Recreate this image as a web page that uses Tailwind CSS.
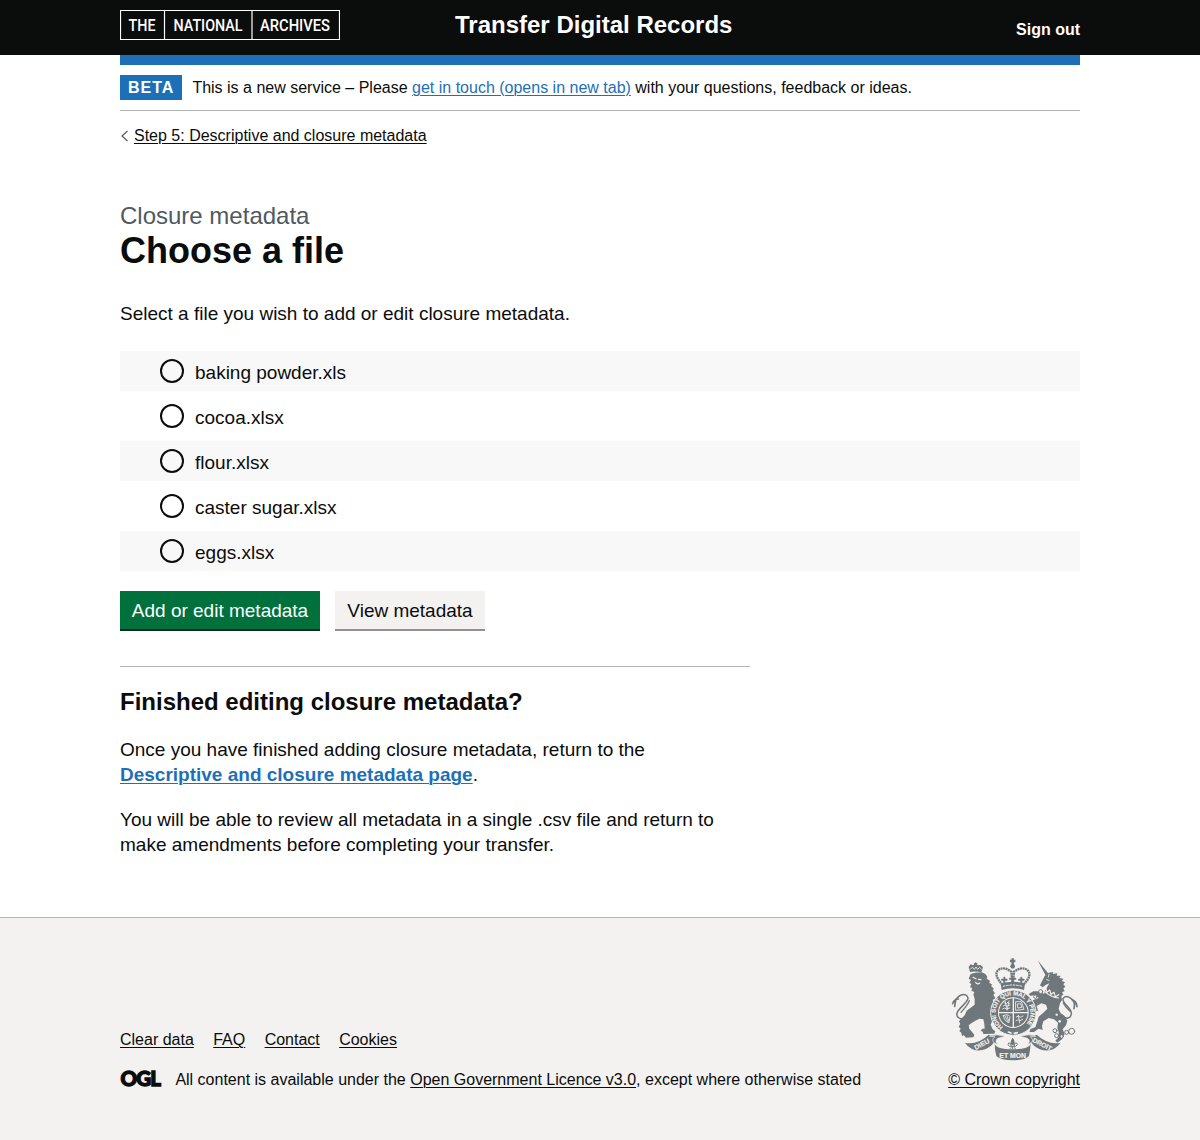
<!DOCTYPE html>
<html lang="en">
<head>
<meta charset="utf-8">
<title>Choose a file - Transfer Digital Records</title>
<script src="https://cdn.jsdelivr.net/npm/@tailwindcss/browser@4"></script>
</head>
<body class="min-h-[1140px] bg-white font-['Liberation_Sans',Arial,sans-serif] text-[#0b0c0c] text-[19px] leading-[25px]">
<header class="h-[55px] bg-[#0b0c0c] text-white">
  <div class="mx-auto flex w-[960px] items-start">
    <svg class="mt-[10px] h-[30px] w-[220px] shrink-0" viewBox="0 0 220 30" fill="#fff" font-family="Roboto, sans-serif" font-size="16.500" font-weight="500" role="img" aria-label="The National Archives">
      <path d="M.5 .5H219.500V29.500H.5ZM44.500 .5V29.500M132 .5V29.500" fill="none" stroke="#fff" stroke-width="1.200"/>
      <text x="8.500" y="21" textLength="27" lengthAdjust="spacingAndGlyphs">THE</text>
      <text x="53.500" y="21" textLength="69" lengthAdjust="spacingAndGlyphs">NATIONAL</text>
      <text x="140" y="21" textLength="70" lengthAdjust="spacingAndGlyphs">ARCHIVES</text>
    </svg>
    <a class="ml-[115px] mt-[10px] text-[24px] leading-[30px] font-bold" href="#">Transfer Digital Records</a>
    <a class="ml-auto mt-5 text-[16px] leading-5 font-bold" href="#">Sign out</a>
  </div>
</header>
<div class="mx-auto w-[960px]">
  <div class="h-[10px] bg-[#1d70b8]"></div>
  <div class="flex h-[46px] items-start border-b border-[#b1b4b6] pt-[10px] text-[16px] leading-[25px]">
    <strong class="h-[25px] w-[62px] bg-[#1d70b8] pl-2 tracking-[1px] text-white">BETA</strong>
    <span class="ml-[10.4px]">This is a new service – Please <a class="text-[#1d70b8] underline decoration-1 underline-offset-2" href="#">get in touch (opens in new tab)</a> with your questions, feedback or ideas.</span>
  </div>
  <a class="mt-[15px] flex h-5 items-center text-[16px] leading-5" href="#">
    <svg class="h-[12px] w-[14px]" viewBox="0 0 14 12" fill="none" stroke="#505a5f" stroke-width="1.200"><path d="M7.500 1L2 6l5.500 5"/></svg>
    <span class="underline decoration-1 underline-offset-2">Step 5: Descriptive and closure metadata</span>
  </a>
  <main class="pt-[55px]">
    <h1><span class="block text-[24px] leading-[30px] text-[#505a5f]">Closure metadata</span><span class="block text-[36px] leading-[40px] font-bold">Choose a file</span></h1>
    <p class="mt-[30px]">Select a file you wish to add or edit closure metadata.</p>
    <div class="mt-[25px] flex flex-col gap-[5px]">
      <label class="flex h-10 items-center gap-[11px] bg-[#f8f8f8] pl-10"><span class="size-6 rounded-full border-2 border-[#0b0c0c]"></span><span class="pt-[3px]">baking powder.xls</span></label>
      <label class="flex h-10 items-center gap-[11px] pl-10"><span class="size-6 rounded-full border-2 border-[#0b0c0c]"></span><span class="pt-[3px]">cocoa.xlsx</span></label>
      <label class="flex h-10 items-center gap-[11px] bg-[#f8f8f8] pl-10"><span class="size-6 rounded-full border-2 border-[#0b0c0c]"></span><span class="pt-[3px]">flour.xlsx</span></label>
      <label class="flex h-10 items-center gap-[11px] pl-10"><span class="size-6 rounded-full border-2 border-[#0b0c0c]"></span><span class="pt-[3px]">caster sugar.xlsx</span></label>
      <label class="flex h-10 items-center gap-[11px] bg-[#f8f8f8] pl-10"><span class="size-6 rounded-full border-2 border-[#0b0c0c]"></span><span class="pt-[3px]">eggs.xlsx</span></label>
    </div>
    <div class="mt-5 flex gap-[15px]">
      <button class="h-10 w-[200px] whitespace-nowrap border-b-2 border-[#002d18] bg-[#00703c] text-white">Add or edit metadata</button>
      <button class="h-10 w-[150px] whitespace-nowrap border-b-2 border-[#929191] bg-[#f3f2f1]">View metadata</button>
    </div>
    <section class="mt-[35px] w-[630px] border-t border-[#b1b4b6] pt-5">
      <h2 class="text-[24px] leading-[30px] font-bold">Finished editing closure metadata?</h2>
      <p class="mt-5">Once you have finished adding closure metadata, return to the<br><a class="font-bold text-[#1d70b8] underline decoration-1 underline-offset-2" href="#">Descriptive and closure metadata page</a>.</p>
      <p class="mt-5">You will be able to review all metadata in a single .csv file and return to<br>make amendments before completing your transfer.</p>
    </section>
  </main>
</div>
<footer class="mt-[60px] h-[223px] border-t border-[#b1b4b6] bg-[#f3f2f1] text-[16px] leading-5">
  <div class="mx-auto flex w-[960px] justify-between">
    <div class="pt-[112px]">
      <nav class="flex gap-[19.4px]">
        <a class="underline decoration-1 underline-offset-2" href="#">Clear data</a>
        <a class="underline decoration-1 underline-offset-2" href="#">FAQ</a>
        <a class="underline decoration-1 underline-offset-2" href="#">Contact</a>
        <a class="underline decoration-1 underline-offset-2" href="#">Cookies</a>
      </nav>
      <div class="mt-5 flex items-start">
        <svg class="mr-[13.4px] h-[18px] w-[42px] overflow-visible" viewBox="0 0 42 18" font-family="Lato, sans-serif" font-size="20.500" font-weight="900" fill="#0b0c0c" stroke="#0b0c0c" stroke-width="1.300" role="img" aria-label="Open Government Licence"><text x="0.400" y="15.900" textLength="40.500" lengthAdjust="spacing">OGL</text></svg>
        <span>All content is available under the <a class="underline decoration-1 underline-offset-2" href="#">Open Government Licence v3.0</a>, except where otherwise stated</span>
      </div>
    </div>
    <div class="flex flex-col items-end pt-[37px]">
      <svg class="h-[108px] w-[130px]" viewBox="30 15 390 324" fill="#6f777b" stroke-linecap="round" stroke-linejoin="round" role="img" aria-label="Royal coat of arms">
        <!-- lion -->
        <path d="M90 66l-4-15 6-8 8 3 4-6 6 1 3 5 9-1 7 7-5 15q-17-4-34-1z"/>
        <path d="M92 56l6-4 5 6 5-7 5 7 6-6 5 5" fill="none" stroke="#f3f2f1" stroke-width="2.500"/>
        <path d="M107 38v7M103 41h8" stroke="#6f777b" stroke-width="3"/>
        <path d="M92 72L105 68 126 67 136 72 142 80 140 86 150 92 148 98 157 104 153 108 162 116 158 120 165 130 160 134 166 145 158 150 162 160 156 166 154 185 160 200 156 214 152 224 158 238 166 244 163 251 130 252 128 245 122 242 127 236 134 236 133 222 130 208 118 206 106 212 94 220 86 226 88 236 98 248 103 255 100 262 78 263 72 256 66 258 64 248 58 244 62 236 56 230 61 222 57 214 64 206 74 196 80 182 94 172 104 164 104 146 100 134 103 126 94 122 97 114 90 112 94 102 88 98 93 90 86 86z"/>
        <path d="M99 82l9 4M115 88l8 1M107 97q6 8 12 2" stroke="#f3f2f1" stroke-width="3.500" fill="none"/>
        <g fill="none" stroke="#6f777b"><path d="M92 178C84 200 66 214 54 202C38 183 82 163 84 145C82 126 52 132 45 157" stroke-width="4.500"/><path d="M55 147Q41 148 38 161M47 148l-3 21" stroke-width="5"/><path d="M63 187Q82 166 88 152" stroke-width="4"/></g>
        <!-- unicorn -->
        <path d="M293 31L328 74 319 80Z"/>
        <path d="M314 78L326 68 340 66 338 72 352 70 350 77 362 77 358 84 370 86 366 93 375 97 370 103 376 110 370 115 374 124 366 126 370 134 364 138 366 150 360 160 356 176 362 190 374 198 382 212 378 226 368 238 374 252 366 268 352 278 346 272 356 262 356 246 352 234 354 218 342 208 326 204 310 214 306 228 308 240 296 236 282 246 268 246 272 236 286 232 292 214 296 200 310 188 322 176 318 164 304 160 290 168 294 182 284 186 278 168 272 160 280 150 296 144 288 134 272 138 266 132 280 124 300 124 312 132 316 122 322 110 328 100 318 104 308 112 300 106z"/>
        <path d="M311 122q22 21 45 22M317 114l4 13 8-7 4 13 9-6 4 13 10-6" fill="none" stroke="#f3f2f1" stroke-width="3.500"/>
        <path d="M320 89l7 2M327 73l-2 8" stroke="#f3f2f1" stroke-width="2.500"/>
        <g fill="none" stroke="#6f777b"><path d="M364 194C378 212 395 204 394 188C390 169 366 162 369 146C377 132 399 144 404 164" stroke-width="4.500"/><path d="M397 149Q410 154 411 170M404 160l-2 16" stroke-width="5"/><path d="M389 183Q375 170 370 159" stroke-width="4"/></g>
        <g fill="none" stroke="#6f777b" stroke-width="3"><circle cx="302" cy="125" r="6" fill="#f3f2f1"/><circle cx="286" cy="140" r="5" fill="#f3f2f1"/><circle cx="345" cy="242" r="6"/><circle cx="350" cy="257" r="6"/><circle cx="365" cy="259" r="5" fill="#f3f2f1"/><circle cx="380" cy="247" r="6"/><circle cx="395" cy="244" r="9"/></g>
        <g fill="#f3f2f1"><circle cx="350" cy="194" r="3.500"/><circle cx="362" cy="178" r="4"/><circle cx="359" cy="214" r="4"/></g>
        <!-- crown -->
        <path d="M218 25v20M210 33h16" stroke="#6f777b" stroke-width="7" stroke-linecap="butt"/><circle cx="218" cy="49" r="7"/>
        <path d="M188 105Q158 72 176 59Q192 49 214 65L218 105L222 65Q244 49 261 59Q280 75 249 105" fill="none" stroke="#6f777b" stroke-width="7" stroke-dasharray="6 1.500" stroke-linecap="butt"/>
        <path d="M182 101q36-12 73 0l-3 19q-34-10-67 0z"/>
        <path d="M193 99v-16M218 95v-14M244 99v-16M186 89h14M210 86h16M237 89h14" stroke="#6f777b" stroke-width="6"/>
        <path d="M190 109q28-8 57 0" fill="none" stroke="#f3f2f1" stroke-width="3" stroke-dasharray="5 5"/>
        <!-- garter and shield -->
        <circle cx="220" cy="188" r="68" stroke="#f3f2f1" stroke-width="3"/>
        <circle cx="220" cy="188" r="46" fill="#f3f2f1"/><circle cx="220" cy="188" r="43"/>
        <path d="M220 145v86M177 188h86" stroke="#f3f2f1" stroke-width="4"/>
        <g fill="none" stroke="#f3f2f1" stroke-width="2.500"><path d="M193 158l4 4 7-5 5 5M190 168l5-3 6 4 8-4M188 177l5-3 7 3 9-3M229 201l7-3 5 4 8-4M228 212l7-3 5 3 8-4M196 155l5 25M207 153l-5 25M235 196l4 23"/><path d="M228 155l16 0 8 23-24 3zM233 162l9-1 4 11-11 2z"/><path d="M190 197q14-7 20 3l-3 18q-14-3-17-21zM195 198l9 17M201 197l5 15"/></g>
        <path id="motto" d="M189 236.500A57.600 57.600 0 1 1 255 234" fill="none" transform="translate(-1 0)"/>
        <text font-family="Liberation Sans, sans-serif" font-size="18" font-weight="700" fill="#f3f2f1" stroke="#f3f2f1" stroke-width=".5" dy="5"><textPath href="#motto" startOffset="3" textLength="274" lengthAdjust="spacing" dy="5">HONI SOIT QUI MAL Y PENSE</textPath></text>
        <path d="M205 246l8 3M223 250l9-2" stroke="#f3f2f1" stroke-width="5"/>
        <!-- ribbon -->
        <path d="M75 278Q112 286 146 254L168 262Q165 276 155 286Q125 310 96 297Q82 290 75 278ZM164 282q6 16 54 16t54-16q-1 16-5 36-14 13-49 13t-49-13q-5-20-5-36ZM268 262L290 254Q325 286 362 278Q354 290 341 297Q312 310 283 288Q271 278 268 262Z"/>
        <path d="M150 258q20-8 46 1l-22 6q-12 7 0 19l-12-6q-9-10 2-17zM286 258q-20-8-46 1l22 6q12 7 0 19l12-6q9-10-2-17z" stroke="#f3f2f1" stroke-width="2"/>
        <g font-family="Liberation Sans, sans-serif" font-size="20" font-weight="700" fill="#f3f2f1" stroke="#f3f2f1" stroke-width=".4"><text transform="translate(107 300) rotate(-28)" textLength="49" lengthAdjust="spacingAndGlyphs">DIEU</text><text x="178" y="324" textLength="80" lengthAdjust="spacingAndGlyphs">ET MON</text><text transform="translate(276 275) rotate(27)" textLength="62" lengthAdjust="spacingAndGlyphs">DROIT</text></g>
        <path d="M218 263q-10 12-3 22h6q7-10-3-22z"/>
        <path d="M214 288q-1-12-8-9-4 4 0 8M222 288q1-12 8-9 4 4 0 8M209 289h18M218 289v8M213 293l-3 3M223 293l3 3" fill="none" stroke="#6f777b" stroke-width="3"/>
      </svg>
      <a class="mt-[7px] underline decoration-1 underline-offset-2" href="#">© Crown copyright</a>
    </div>
  </div>
</footer>
</body>
</html>
